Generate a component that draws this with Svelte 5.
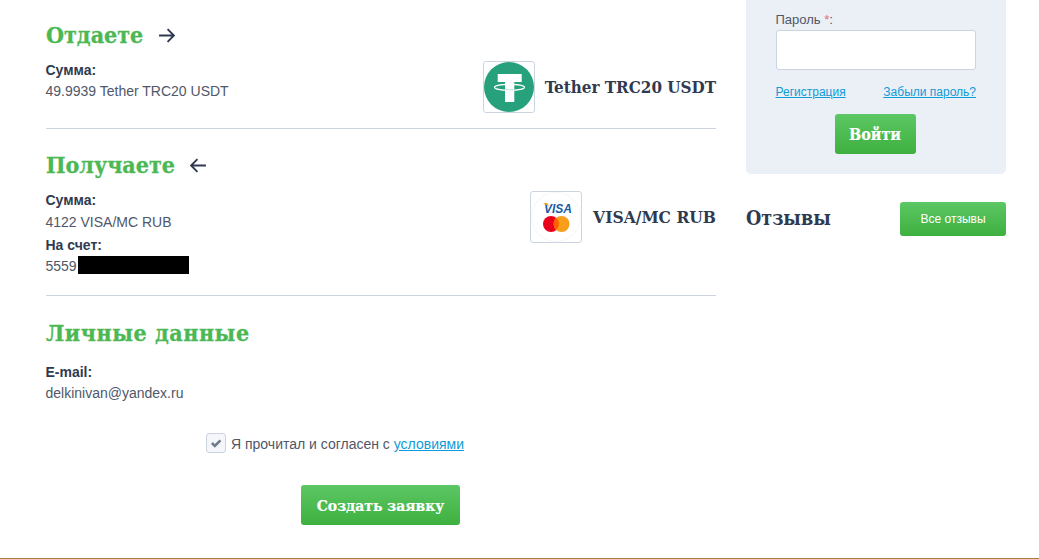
<script>
  const arrowPath = "M1 8H15M9 2l6 6-6 6";
</script>

<div class="page">
  <main class="left">
    <section class="block first">
      <div class="info">
        <h2>Отдаете <svg class="arrow" viewBox="0 0 16 16"><path d={arrowPath} /></svg></h2>
        <div class="label">Сумма:</div>
        <div class="value tight">49.9939 Tether TRC20 USDT</div>
      </div>
      <div class="coin tether">
        <div class="logo">
          <svg viewBox="0 0 50 50" width="50" height="50">
            <circle cx="25" cy="25" r="25" fill="#26a17b" />
            <path d="M13.7 12h24v8h-7.4v20H21V20h-7.3z" fill="#fff" />
            <ellipse cx="25.5" cy="25.3" rx="15" ry="3" fill="none" stroke="#fff" stroke-width="1.2" />
            <path d="M21 27.6q4.6 .7 9.3 0" fill="none" stroke="#bfe3d7" stroke-width="1" />
          </svg>
        </div>
        <span>Tether TRC20 USDT</span>
      </div>
    </section>

    <section class="block second">
      <div class="info">
        <h2>Получаете <svg class="arrow" viewBox="0 0 16 16"><path d="M15 8H1M7 2L1 8l6 6" /></svg></h2>
        <div class="label">Сумма:</div>
        <div class="value">4122 VISA/MC RUB</div>
        <div class="label lower">На счет:</div>
        <div class="value tight acct">5559<i class="mask"></i></div>
      </div>
      <div class="coin visa">
        <div class="logo">
          <svg viewBox="0 0 50 50" width="50" height="50">
            <circle cx="25" cy="25" r="24.5" fill="#fff" stroke="#f6f6f6" />
            <text x="13" y="20.5" class="visatext">VISA</text>
            <path d="M12 11h4.5l1.5 3.5z" fill="#f7a823" />
            <circle cx="20" cy="32" r="8" fill="#eb001b" />
            <circle cx="30.5" cy="32" r="8" fill="#f79e1b" />
            <path d="M25.25 26a8 8 0 0 1 0 12a8 8 0 0 1 0-12z" fill="#ff5f00" />
          </svg>
        </div>
        <span>VISA/MC RUB</span>
      </div>
    </section>

    <section class="personal">
      <h2 class="wide">Личные данные</h2>
      <div class="label">E-mail:</div>
      <div class="value tight">delkinivan@yandex.ru</div>
    </section>

    <div class="agree">
      <span class="check">
        <svg viewBox="0 0 12 12" width="14" height="14"><path d="M2.5 6l2.5 2.5L9.8 3.8" /></svg>
      </span>
      <span class="agree-text">Я прочитал и согласен с <a href="#terms">условиями</a></span>
    </div>

    <div class="submit"><button class="btn big">Создать заявку</button></div>
  </main>

  <aside class="right">
    <div class="panel">
      <div class="plabel">Пароль <em>*</em>:</div>
      <div class="input"></div>
      <div class="links"><a href="#r">Регистрация</a><a href="#f">Забыли пароль?</a></div>
      <div class="login"><button class="btn mid">Войти</button></div>
    </div>
    <div class="reviews">
      <h3>Отзывы</h3>
      <button class="btn small">Все отзывы</button>
    </div>
  </aside>
</div>
<div class="footerline"></div>

<style>
  :global(body) { margin: 0; background: #fff; overflow: hidden; }
  .page {
    display: flex;
    gap: 30px;
    height: 558px;
    padding-left: 46px;
    box-sizing: border-box;
    font-family: "Liberation Sans", Arial, sans-serif;
    font-size: 14px;
    color: #2f3a50;
  }
  .left { width: 670px; }
  .right { width: 260px; }
  h2 {
    margin: 0;
    font-family: "DejaVu Serif Condensed", "DejaVu Serif", serif;
    font-weight: 700;
    font-size: 23px;
    line-height: 28px;
    color: #4cb853;
    display: flex;
    align-items: center;
    gap: 15px;
    -webkit-text-stroke: 0.3px #4cb853;
  }
  h2.wide { letter-spacing: 0.55px; }
  .arrow { width: 17px; height: 17px; fill: none; stroke: #2f3a50; stroke-width: 1.8; }
  .block { display: flex; justify-content: space-between; border-bottom: 1px solid #ccd4e2; }
  .first { height: 129px; padding-top: 21px; box-sizing: border-box; }
  .second { height: 167px; padding-top: 22px; box-sizing: border-box; }
  .label { font-weight: 700; line-height: 18px; margin: 12px 0 0 -0.5px; }
  .label.lower { margin-top: 5px; }
  .value { color: #4f5769; line-height: 18px; margin: 4px 0 0 -0.5px; display: flex; }
  .value.tight { margin-top: 3px; }
  .mask { display: block; width: 111px; height: 18px; margin: -1px 0 1px 1px; background: #000; }
  .coin {
    display: flex;
    align-items: center;
    gap: 10px;
    font-family: "DejaVu Serif Condensed", "DejaVu Serif", serif;
    font-weight: 700;
    font-size: 16.9px;
    height: 52px;
    margin-top: 40px;
  }
  .visa { gap: 11px; font-size: 17.3px; }
  .logo { width: 50px; height: 50px; border: 1px solid #ccd4e2; border-radius: 3px; }
  .logo svg { display: block; }
  .visatext { font: italic 700 12px "Liberation Sans", sans-serif; fill: #1a5ba6; }
  .personal { padding-top: 23px; }
  .personal .label { margin-top: 16px; }
  .agree { display: flex; align-items: center; gap: 5px; margin: 31px 0 0 160px; color: #4f5769; }
  .agree-text { position: relative; top: 1px; }
  .check { width: 18px; height: 18px; border: 1px solid #ccd4e2; border-radius: 3px; background: #f4f6fa; display: flex; align-items: center; justify-content: center; }
  .check path { fill: none; stroke: #6f7a8e; stroke-width: 2.2; }
  a { color: #0f9bd7; text-decoration: underline; }
  .submit { display: flex; margin: 32px 0 0 255px; }
  .btn {
    display: block;
    border: 0;
    border-radius: 3px;
    color: #fff;
    background: linear-gradient(#5cc764, #3eb03f);
    padding: 0;
  }
  .big, .mid { font-family: "DejaVu Serif Condensed", "DejaVu Serif", serif; font-weight: 700; font-size: 16px; height: 40px; -webkit-text-stroke: 0.2px #fff; }
  .big { width: 159px; font-size: 15.5px; }
  .mid { width: 81px; }
  .small { width: 106px; height: 34px; font-family: "Liberation Sans", sans-serif; font-size: 12px; }
  .panel { height: 174px; background: #ebeff6; border-radius: 0 0 5px 5px; padding: 12px 30px 0; box-sizing: border-box; }
  .plabel { font-size: 13px; line-height: 15px; color: #4f5769; margin-left: -0.5px; }
  .plabel em { font-style: normal; color: #d9707a; }
  .input { height: 38px; margin-top: 3px; background: #fff; border: 1px solid #ccd4e2; border-radius: 3px; }
  .links { display: flex; justify-content: space-between; font-size: 12px; margin: 14px 0 0 -0.5px; line-height: 16px; }
  .login { display: flex; justify-content: center; margin: 14px 0 0 -2px; }
  .reviews { display: flex; justify-content: space-between; align-items: center; margin-top: 28px; }
  h3 { margin: -2px 0 0; font-family: "DejaVu Serif Condensed", "DejaVu Serif", serif; font-size: 19.5px; font-weight: 700; }
  .footerline { height: 1px; background: #a97f3a; }
</style>
